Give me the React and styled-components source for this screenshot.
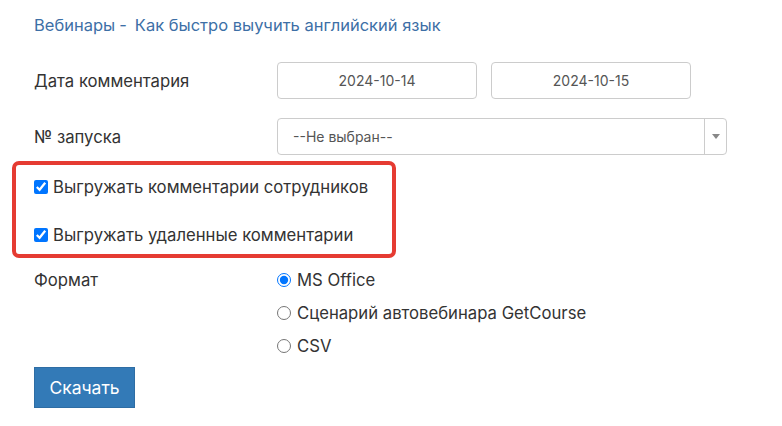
import React from "react";
import styled, { createGlobalStyle } from "styled-components";

const GlobalStyle = createGlobalStyle`
	html, body {
		margin: 0;
		padding: 0;
		background: #fff;
	}
	body {
		font-family: Inter, "Noto Sans", "Liberation Sans", sans-serif;
		font-size: 16.7px;
		color: #333;
	}
`;

const Page = styled.div`
	width: 782px;
	height: 426px;
	box-sizing: border-box;
	padding: 15px 0 0 12px;
	overflow: hidden;
`;

const Breadcrumbs = styled.div`
	padding-left: 22px;
	line-height: 20px;
	font-size: 16.5px;
	color: #3d6fa6;
	a {
		color: inherit;
		text-decoration: none;
	}
	.sep {
		margin: 0 8px 0 4px;
	}
`;

const FormRow = styled.div`
	display: grid;
	grid-template-columns: 243px 1fr;
	align-items: center;
	padding-left: 22px;
	height: 37px;
	margin-top: ${props => props.$top || 0}px;
`;

const Label = styled.div`
	line-height: 24px;
	color: #333;
`;

const Controls = styled.div`
	display: flex;
	gap: 14px;
`;

const DateInput = styled.input`
	width: 200px;
	height: 37px;
	box-sizing: border-box;
	border: 1px solid #ccc;
	border-radius: 4px;
	font-family: inherit;
	font-size: 14px;
	color: #555;
	text-align: center;
	padding: 0 8px;
	outline: none;
`;

const Select = styled.div`
	width: 450px;
	height: 37px;
	box-sizing: border-box;
	border: 1px solid #ccc;
	border-radius: 4px;
	display: flex;
	align-items: stretch;
	font-size: 14px;
	color: #555;
	.value {
		flex: 1;
		display: flex;
		align-items: center;
		padding-left: 15px;
	}
	.arrow {
		width: 21px;
		border-left: 1px solid #ccc;
		display: flex;
		align-items: center;
		justify-content: center;
	}
`;

const Highlight = styled.div`
	margin-top: 6px;
	width: 384px;
	box-sizing: border-box;
	border: 4px solid #e53b32;
	border-radius: 7px;
	padding: 10px 0 7px 18px;
	display: flex;
	flex-direction: column;
	gap: 24px;
`;

const Check = styled.label`
	display: flex;
	align-items: center;
	gap: 5px;
	line-height: 24px;
	color: #333;
	input {
		width: 14px;
		height: 14px;
		margin: 0;
		accent-color: #0075ff;
	}
`;

const FormatBlock = styled.div`
	display: grid;
	grid-template-columns: 243px 1fr;
	padding-left: 22px;
	margin-top: 10px;
`;

const RadioList = styled.div`
	display: flex;
	flex-direction: column;
	gap: 9px;
`;

const Radio = styled.label`
	display: flex;
	align-items: center;
	gap: 6px;
	line-height: 24px;
	color: #333;
	input {
		width: 14px;
		height: 14px;
		margin: 0;
		accent-color: #0075ff;
	}
`;

const Button = styled.button`
	margin: 9px 0 0 22px;
	width: 101px;
	height: 41px;
	background: #337ab7;
	border: 1px solid #2e6da4;
	border-radius: 0;
	color: #fff;
	font-family: inherit;
	font-size: 17.5px;
	cursor: pointer;
`;

const App = () => {
	return (
		<React.Fragment>
			<GlobalStyle />
			<Page>
				<Breadcrumbs>
					<a href="#">Вебинары</a>
					<span className="sep">-</span>
					<a href="#">Как быстро выучить английский язык</a>
				</Breadcrumbs>

				<FormRow $top={27}>
					<Label>Дата комментария</Label>
					<Controls>
						<DateInput defaultValue="2024-10-14" />
						<DateInput defaultValue="2024-10-15" />
					</Controls>
				</FormRow>

				<FormRow $top={19}>
					<Label>№ запуска</Label>
					<Select>
						<div className="value">--Не выбран--</div>
						<div className="arrow">
							<svg width="8" height="5" viewBox="0 0 8 5">
								<path d="M0 0 L8 0 L4 5 Z" fill="#888" />
							</svg>
						</div>
					</Select>
				</FormRow>

				<Highlight>
					<Check>
						<input type="checkbox" defaultChecked />
						Выгружать комментарии сотрудников
					</Check>
					<Check>
						<input type="checkbox" defaultChecked />
						Выгружать удаленные комментарии
					</Check>
				</Highlight>

				<FormatBlock>
					<Label>Формат</Label>
					<RadioList>
						<Radio>
							<input type="radio" name="format" defaultChecked />
							MS Office
						</Radio>
						<Radio>
							<input type="radio" name="format" />
							Сценарий автовебинара GetCourse
						</Radio>
						<Radio>
							<input type="radio" name="format" />
							CSV
						</Radio>
					</RadioList>
				</FormatBlock>

				<Button type="button">Скачать</Button>
			</Page>
		</React.Fragment>
	);
};

export default App;
